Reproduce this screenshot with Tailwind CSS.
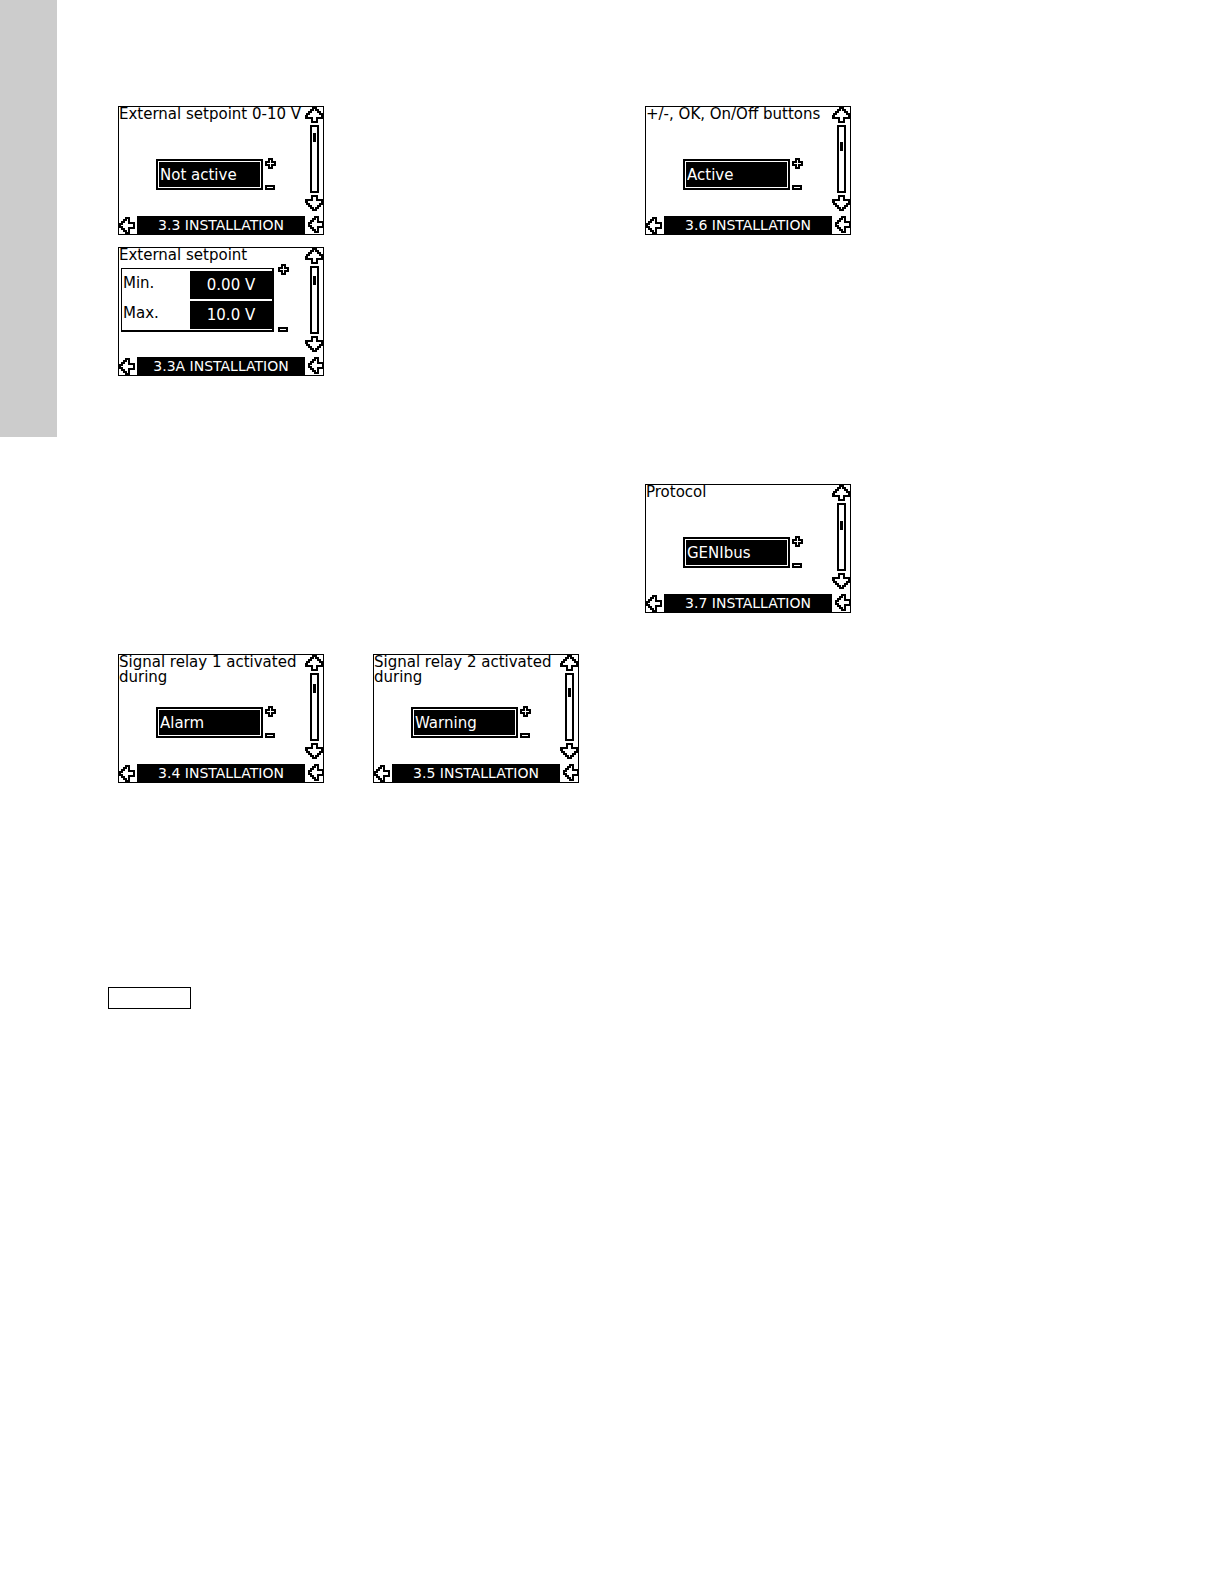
<!DOCTYPE html>
<html lang="en">
  <head>
    <meta charset="UTF-8" />
    <meta name="viewport" content="width=device-width, initial-scale=1.0" />
    <title>Installation displays</title>
    <script src="https://cdn.jsdelivr.net/npm/@tailwindcss/browser@4"></script>
  </head>
  <body class="bg-white text-black font-['DejaVu_Sans',sans-serif]">
    <svg class="hidden">
      <symbol id="up" viewBox="0 0 19 16">
        <path d="M8 1 H11 V3 H13 V5 H15 V7 H17 V9 H18 V11 H12 V15 H7 V11 H1 V9 H2 V7 H4 V5 H6 V3 H8 Z" fill="#fff" stroke="#000" stroke-width="2" shape-rendering="crispEdges" />
      </symbol>
      <symbol id="down" viewBox="0 0 19 16">
        <path d="M8 15 H11 V13 H13 V11 H15 V9 H17 V7 H18 V5 H12 V1 H7 V5 H1 V7 H2 V9 H4 V11 H6 V13 H8 Z" fill="#fff" stroke="#000" stroke-width="2" shape-rendering="crispEdges" />
      </symbol>
      <symbol id="back" viewBox="0 0 16 17">
        <path d="M1 7 V10 H3 V12 H5 V14 H7 V16 H10 V11 H15 V6 H10 V1 H7 V3 H5 V5 H3 V7 Z" fill="#fff" stroke="#000" stroke-width="2" shape-rendering="crispEdges" />
      </symbol>
      <symbol id="plus" viewBox="0 0 11 11">
        <path d="M4 1 H7 V4 H10 V7 H7 V10 H4 V7 H1 V4 H4 Z" fill="#fff" stroke="#000" stroke-width="2" shape-rendering="crispEdges" />
      </symbol>
      <symbol id="minus" viewBox="0 0 10 5">
        <path d="M1 1 H9 V4 H1 Z" fill="#fff" stroke="#000" stroke-width="2" shape-rendering="crispEdges" />
      </symbol>
    </svg>

    <div class="flex items-start">
      <aside class="w-[57px] h-[437px] shrink-0 bg-[#cccccc]"></aside>

      <main class="flex-1 grid grid-cols-[537fr_579fr] items-start pt-[106px] pl-[51px]">
        <div>
          <div class="ml-[10px] flex flex-col gap-3">
            <div data-screen="3.3"></div>
            <div data-screen="3.3A"></div>
          </div>
          <div class="ml-[10px] mt-[278px] flex gap-[49px]">
            <div data-screen="3.4"></div>
            <div data-screen="3.5"></div>
          </div>
          <div class="mt-[204px] w-[83px] h-[22px] border border-black"></div>
        </div>

        <div class="flex flex-col gap-[249px]">
          <div data-screen="3.6"></div>
          <div data-screen="3.7"></div>
        </div>
      </main>
    </div>

    <script>
      const screens = {
        "3.3": { title: "External setpoint 0-10 V", value: "Not active", thumb: 6 },
        "3.3A": {
          title: "External setpoint",
          rows: [
            ["Min.", "0.00 V"],
            ["Max.", "10.0 V"],
          ],
          thumb: 8,
        },
        "3.4": { title: "Signal relay 1 activated during", value: "Alarm", thumb: 9 },
        "3.5": { title: "Signal relay 2 activated during", value: "Warning", thumb: 13 },
        "3.6": { title: "+/-, OK, On/Off buttons", value: "Active", thumb: 15 },
        "3.7": { title: "Protocol", value: "GENIbus", thumb: 16 },
      };

      const plusMinus = `
        <button type="button" aria-label="Increase" class="block"><svg class="block w-[11px] h-[11px]"><use href="#plus" /></svg></button>
        <button type="button" aria-label="Decrease" class="block"><svg class="block w-[10px] h-[5px]"><use href="#minus" /></svg></button>`;

      // single value in a framed box
      function valueBody(id, screen) {
        return `
          <label for="value-${id}" class="h-[52px] text-[15px] leading-[15px]">${screen.title}</label>
          <div class="ml-[37px] flex gap-0.5">
            <div class="w-[107px] h-[31px] border-2 border-black p-px">
              <input id="value-${id}" value="${screen.value}" readonly class="block w-full h-full bg-black text-white pl-px text-[15px] leading-[15px]" />
            </div>
            <div class="-mt-px h-8 flex flex-col justify-between">${plusMinus}</div>
          </div>`;
      }

      // min. and max. values in a shared frame
      function rangeBody(id, screen) {
        const rows = screen.rows
          .map(
            ([name, value], i) => `
            <label for="value-${id}-${i}" class="flex-1 pl-px pb-1">${name}</label>
            <input id="value-${id}-${i}" value="${value}" readonly class="w-[82px] h-7 bg-black text-white text-center" />`
          )
          .map((row) => `<div class="flex items-center">${row}</div>`)
          .join("");
        return `
          <h2 class="h-5 text-[15px] leading-[15px]">${screen.title}</h2>
          <div class="ml-0.5 flex gap-1">
            <div class="w-[153px] border border-r-2 border-b-2 border-black pt-0.5 pb-px flex flex-col gap-0.5 text-[15px] leading-[15px]">${rows}</div>
            <div class="-mt-1 flex flex-col justify-between">${plusMinus}</div>
          </div>`;
      }

      function drawScreen(id, screen) {
        return `
          <section class="w-[206px] border border-black">
            <div class="flex h-[109px]">
              <div class="flex-1 flex flex-col">${screen.rows ? rangeBody(id, screen) : valueBody(id, screen)}</div>
              <div class="w-[19px] -mr-px h-[104px] flex flex-col justify-between">
                <button type="button" aria-label="Up" class="block"><svg class="block w-[19px] h-4"><use href="#up" /></svg></button>
                <div class="self-center w-[9px] h-[68px] border-2 border-black flex justify-center items-start">
                  <div class="w-[3px] h-[9px] bg-black" style="margin-top: ${screen.thumb}px"></div>
                </div>
                <button type="button" aria-label="Down" class="block"><svg class="block w-[19px] h-4"><use href="#down" /></svg></button>
              </div>
            </div>
            <div class="flex h-[18px]">
              <button type="button" aria-label="Previous" class="w-[18px]"><svg class="block w-4 h-[17px]"><use href="#back" /></svg></button>
              <div class="flex-1 bg-black text-white text-center text-[14px] leading-[18px] whitespace-nowrap">${id} INSTALLATION</div>
              <button type="button" aria-label="Next" class="w-[19px] -mr-px flex justify-end"><svg class="block w-4 h-[17px]"><use href="#back" /></svg></button>
            </div>
          </section>`;
      }

      document.querySelectorAll("[data-screen]").forEach((el) => {
        const id = el.dataset.screen;
        el.innerHTML = drawScreen(id, screens[id]);
      });
    </script>
  </body>
</html>
